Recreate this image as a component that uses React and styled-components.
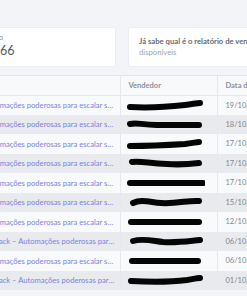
import React from 'react';
import styled, { createGlobalStyle } from 'styled-components';

const GlobalStyle = createGlobalStyle`
  html, body {
    margin: 0;
    padding: 0;
    background: #f3f4f7;
    overflow: hidden;
  }
  body {
    font-family: Lato, "Noto Sans", sans-serif;
  }
`;

const Page = styled.div`
  display: flex;
  flex-direction: column;
  gap: 8px;
  padding-top: 27px;
  width: 600px;
`;

const CardsRow = styled.div`
  display: grid;
  grid-template-columns: 170px 300px;
  gap: 12px;
  margin-left: -54px;
`;

const Card = styled.div`
  box-sizing: border-box;
  height: 40px;
  background: #fff;
  border: 1px solid #eceef1;
  border-radius: 3px;
  padding: ${({ $compact }) => ($compact ? '5px 10px' : '8px 10px')};
  display: flex;
  flex-direction: column;
  gap: ${({ $compact }) => ($compact ? '2px' : '0')};
`;

const StatLabel = styled.span`
  font-size: 7.5px;
  line-height: 9px;
  color: #8a8e95;
  white-space: nowrap;
  padding-left: 2px;
`;

const StatValue = styled.span`
  font-size: 12.5px;
  line-height: 14px;
  color: #55595f;
  white-space: nowrap;
`;

const InfoTitle = styled.span`
  font-size: 7.7px;
  line-height: 11px;
  font-weight: 700;
  color: #676b72;
  white-space: nowrap;
`;

const InfoText = styled.span`
  font-size: 7.7px;
  line-height: 11px;
  color: #a2a6ad;
`;

const TableWrap = styled.div`
  margin-left: -42px;
  border-top: 1px solid #e6e8eb;
`;

const Table = styled.table`
  border-collapse: collapse;
  table-layout: fixed;
  width: 400px;
`;

const Th = styled.th`
  box-sizing: border-box;
  height: 19px;
  padding: 0 8px;
  text-align: left;
  font-size: 7.5px;
  font-weight: 700;
  color: #8d9198;
  background: #f8f9fa;
  border-right: 1px solid #e6e8eb;
  border-bottom: 1px solid #e6e8eb;
`;

const Row = styled.tr`
  background: ${({ $striped }) => ($striped ? '#e8eaee' : '#f9fafb')};
`;

const Td = styled.td`
  box-sizing: border-box;
  height: 19.5px;
  padding: 0 8px;
  font-size: 7.5px;
  color: #80858c;
  border-right: 1px solid #e6e8eb;
  white-space: nowrap;
  overflow: hidden;
  text-overflow: ellipsis;
`;

const ProductCell = styled(Td)`
  padding-right: 4px;
  font-size: 7.6px;
  color: #7a83e2;
`;

const ProductLink = styled.a`
  color: inherit;
  text-decoration: none;
`;

const ScribbleSvg = styled.svg`
  display: block;
  width: 78px;
  height: 12px;
  margin-left: -2px;
`;

const scribbles = [
  'M3 8 C20 9 40 8 58 6 C66 5 70 4 73 4',
  'M3 6 C10 4 14 7 30 7 C48 7 60 7 72 7',
  'M3 8 C22 8 42 7 58 6 C66 5 70 4 72 4',
  'M5 5 C14 4 20 6 40 7 C54 8 64 7 72 6',
  'M3 6 L76 6',
  'M6 7 C14 3 22 6 34 7 C50 8 62 4 72 5',
  'M4 6 C24 6 50 6 72 6',
  'M6 6 C16 3 26 6 36 7 C50 8 62 6 73 5',
  'M5 6 C26 6 50 6 71 6',
  'M4 7 C22 8 44 8 60 6 C66 5 70 4 73 4',
];

const Scribble = ({ d }) => (
  <ScribbleSvg viewBox="0 0 78 12">
    <path d={d} fill="none" stroke="#050505" strokeWidth="6" strokeLinecap="round" />
  </ScribbleSvg>
);

const product = 'Pack Automações poderosas para escalar suas vendas';
const productHack = 'Growth Hack – Automações poderosas para escalar suas vendas';

const sales = [
  { product, date: '19/10/2025 14:32' },
  { product, date: '18/10/2025 09:12' },
  { product, date: '17/10/2025 21:40' },
  { product, date: '17/10/2025 16:05' },
  { product, date: '17/10/2025 08:47' },
  { product, date: '15/10/2025 19:23' },
  { product, date: '12/10/2025 11:58' },
  { product: productHack, date: '06/10/2025 22:10' },
  { product, date: '06/10/2025 13:36' },
  { product: productHack, date: '01/10/2025 10:02' },
];

export default function App() {
  return (
    <>
      <GlobalStyle />
      <Page>
        <CardsRow>
          <Card $compact>
            <StatLabel>Total vendido</StatLabel>
            <StatValue>R$ 12.866</StatValue>
          </Card>
          <Card>
            <InfoTitle>Já sabe qual é o relatório de vendas que você procura?</InfoTitle>
            <InfoText>disponíveis</InfoText>
          </Card>
        </CardsRow>
        <TableWrap>
          <Table>
            <colgroup>
              <col style={{ width: 162 }} />
              <col style={{ width: 97 }} />
              <col style={{ width: 141 }} />
            </colgroup>
            <thead>
              <tr>
                <Th>Produto</Th>
                <Th>Vendedor</Th>
                <Th>Data da venda</Th>
              </tr>
            </thead>
            <tbody>
              {sales.map((sale, i) => (
                <Row key={i} $striped={i % 2 === 1}>
                  <ProductCell>
                    <ProductLink href="#">{sale.product}</ProductLink>
                  </ProductCell>
                  <Td>
                    <Scribble d={scribbles[i]} />
                  </Td>
                  <Td>{sale.date}</Td>
                </Row>
              ))}
            </tbody>
          </Table>
        </TableWrap>
      </Page>
    </>
  );
}
